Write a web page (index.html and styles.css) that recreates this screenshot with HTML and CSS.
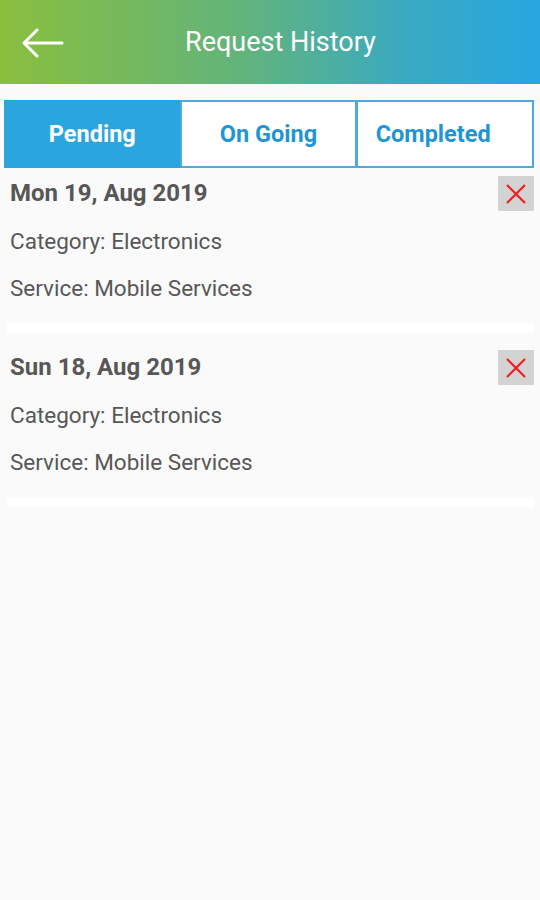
FILE: index.html
```html
<!doctype html>
<html lang="en">
<head>
  <meta charset="UTF-8" />
  <meta name="viewport" content="width=device-width, initial-scale=1" />
  <title>Request History</title>
  <link rel="stylesheet" href="styles.css">
</head>
<body>
  <div id="toolbar">
    <a class="back" href="#">
      <svg width="42" height="30" viewBox="0 0 42 30">
        <path d="M40 15H3M15 2L2 15l13 13" fill="none" stroke="#fff" stroke-width="3" stroke-linecap="round" stroke-linejoin="round"/>
      </svg>
    </a>
    <h1>Request History</h1>
  </div>

  <div id="tabs">
    <a class="tab active" href="#">Pending</a>
    <a class="tab" href="#">On Going</a>
    <a class="tab last" href="#">Completed</a>
  </div>

  <div id="list">
    <div class="request">
      <div class="request-body">
        <div class="request-head">
          <span class="date">Mon 19, Aug 2019</span>
          <button class="remove" aria-label="Delete">
            <svg width="22" height="22" viewBox="0 0 22 22"><path d="M2 2l18 18M20 2L2 20" stroke="#f21c1c" stroke-width="2.2"/></svg>
          </button>
        </div>
        <div class="line">Category: Electronics</div>
        <div class="line">Service: Mobile Services</div>
      </div>
      <div class="divider"></div>
    </div>
    <div class="request">
      <div class="request-body">
        <div class="request-head">
          <span class="date">Sun 18, Aug 2019</span>
          <button class="remove" aria-label="Delete">
            <svg width="22" height="22" viewBox="0 0 22 22"><path d="M2 2l18 18M20 2L2 20" stroke="#f21c1c" stroke-width="2.2"/></svg>
          </button>
        </div>
        <div class="line">Category: Electronics</div>
        <div class="line">Service: Mobile Services</div>
      </div>
      <div class="divider"></div>
    </div>
  </div>
</body>
</html>
```

FILE: styles.css
```css
body {
  margin: 0;
  font-family: Roboto, "Liberation Sans", sans-serif;
  background-color: #fafafa;
  color: #575757;
  min-height: 100vh;
}
#toolbar {
  height: 84px;
  background: linear-gradient(90deg, #8abf3e 0%, #62b47c 45%, #3aaac2 75%, #27a6e0 100%);
  display: flex;
  align-items: center;
}
#toolbar .back {
  display: flex;
  margin-left: 22px;
  margin-top: 1px;
}
#toolbar h1 {
  margin: 0 0 0 121px;
  font-size: 27px;
  font-weight: 400;
  color: #fff;
}
#tabs {
  display: grid;
  grid-template-columns: repeat(3, 1fr);
  margin: 16px 6px 0 4px;
  height: 68px;
}
#tabs .tab {
  display: flex;
  align-items: center;
  justify-content: center;
  border: 2px solid #4fa9dc;
  background: #fff;
  color: #1f95d6;
  font-size: 23.5px;
  font-weight: 700;
  text-decoration: none;
}
#tabs .tab + .tab {
  margin-left: -1px;
}
#tabs .tab.last {
  padding-right: 24px;
}
#tabs .tab.active {
  background: #2ba5de;
  border-color: #2ba5de;
  color: #fff;
}
#list {
  margin-top: 2px;
}
.request {
  margin-bottom: 11px;
}
.request-body {
  padding: 6px 6px 0 10px;
  height: 147px;
}
.request-head {
  display: flex;
  justify-content: space-between;
  align-items: flex-start;
}
.date {
  font-size: 24px;
  font-weight: 700;
  line-height: 28px;
  margin-top: 3px;
}
.remove {
  width: 36px;
  height: 35px;
  border: none;
  padding: 0;
  background: #d3d3d3;
  display: flex;
  align-items: center;
  justify-content: center;
}
.line {
  font-size: 22.5px;
  line-height: 28px;
  margin-top: 19px;
}
.request-head + .line {
  margin-top: 16px;
}
.divider {
  height: 10px;
  margin: 0 6px 0 7px;
  background: #fff;
}
```
